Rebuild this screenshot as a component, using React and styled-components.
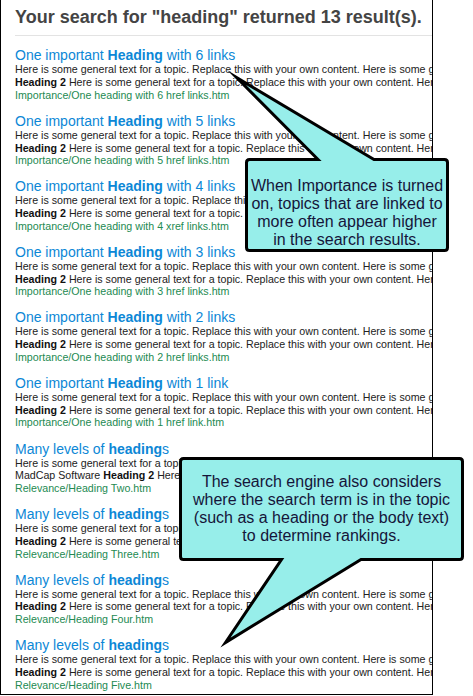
import React from "react";
import styled, { createGlobalStyle } from "styled-components";

const BODY_TEXT =
  "Here is some general text for a topic. Replace this with your own content. Here is some general text for a topic. Replace this with your own content.";

const importance = [
  { count: 6, kind: "href", word: "links" },
  { count: 5, kind: "href", word: "links" },
  { count: 4, kind: "xref", word: "links" },
  { count: 3, kind: "href", word: "links" },
  { count: 2, kind: "href", word: "links" },
  { count: 1, kind: "href", word: "link" },
].map((el) => ({
  title: (
    <>
      One important <b>Heading</b> with {el.count} {el.word}
    </>
  ),
  prefix: "",
  url: `Importance/One heading with ${el.count} ${el.kind} ${el.word}.htm`,
}));

const relevance = [
  { page: "Two", prefix: "MadCap Software " },
  { page: "Three", prefix: "" },
  { page: "Four", prefix: "" },
  { page: "Five", prefix: "" },
].map((el) => ({
  title: (
    <>
      Many levels of <b>heading</b>s
    </>
  ),
  prefix: el.prefix,
  url: `Relevance/Heading ${el.page}.htm`,
}));

const results = [...importance, ...relevance];

const App = () => {
  return (
    <>
      <GlobalStyle />
      <Page>
        <Frame>
          <Header>Your search for "heading" returned 13 result(s).</Header>
          <ResultList>
            {results.map((el, i) => (
              <Result key={i}>
                <ResultTitle>{el.title}</ResultTitle>
                <ResultText>{BODY_TEXT}</ResultText>
                <ResultText>
                  {el.prefix}
                  <b>Heading 2</b> {BODY_TEXT}
                </ResultText>
                <ResultUrl>{el.url}</ResultUrl>
              </Result>
            ))}
          </ResultList>
        </Frame>

        <Balloons viewBox="0 0 473 696" width="473" height="696">
          <path d="M 249.5 159.5 L 318 159.5 L 236.5 77.5 L 374 159.5 L 444.5 159.5 Q 447.5 159.5 447.5 162.5 L 447.5 247.5 Q 447.5 250.5 444.5 250.5 L 249.5 250.5 Q 246.5 250.5 246.5 247.5 L 246.5 162.5 Q 246.5 159.5 249.5 159.5 Z" />
          <path d="M 183.5 458.5 L 459.5 458.5 Q 462.5 458.5 462.5 461.5 L 462.5 556.5 Q 462.5 559.5 459.5 559.5 L 361 559.5 L 225.5 642.5 L 281.5 559.5 L 183.5 559.5 Q 180.5 559.5 180.5 556.5 L 180.5 461.5 Q 180.5 458.5 183.5 458.5 Z" />
        </Balloons>

        <BalloonText $left={245} $top={177} $width={204}>
          When Importance is turned
          <br />
          on, topics that are linked to
          <br />
          more often appear higher
          <br />
          in the search results.
        </BalloonText>
        <BalloonText $left={179} $top={473} $width={285}>
          The search engine also considers
          <br />
          where the search term is in the topic
          <br />
          (such as a heading or the body text)
          <br />
          to determine rankings.
        </BalloonText>
      </Page>
    </>
  );
};

const GlobalStyle = createGlobalStyle`
  html, body {
    margin: 0;
    padding: 0;
    background: #ffffff;
  }
  body {
    font-family: "Liberation Sans", Arial, sans-serif;
  }
`;

const Page = styled.div`
  position: relative;
  width: 473px;
  height: 696px;
  overflow: hidden;
`;

const Frame = styled.div`
  box-sizing: border-box;
  width: 433px;
  height: 695px;
  border: 1px solid #000;
  border-top: none;
  padding-left: 14px;
  overflow: hidden;
`;

const Header = styled.div`
  padding: 6px 0 7px;
  border-bottom: 1px solid #e3e3e3;
  font-size: 18px;
  line-height: 22px;
  font-weight: 700;
  color: #444444;
  white-space: nowrap;
`;

const ResultList = styled.div`
  display: flex;
  flex-direction: column;
  gap: 12.45px;
  margin-top: 12.3px;
`;

const Result = styled.div`
  display: flex;
  flex-direction: column;
  white-space: nowrap;
`;

const ResultTitle = styled.div`
  font-size: 14px;
  line-height: 15px;
  color: #0c87d6;
`;

const ResultText = styled.div`
  font-size: 10.67px;
  line-height: 12.7px;
  color: #222222;

  b {
    color: #111111;
  }
`;

const ResultUrl = styled.div`
  font-size: 10.67px;
  line-height: 12.7px;
  color: #238a52;
`;

const Balloons = styled.svg`
  position: absolute;
  top: 0;
  left: 0;
  pointer-events: none;

  path {
    fill: #97eeea;
    stroke: #000;
    stroke-width: 3;
    stroke-linejoin: miter;
    stroke-miterlimit: 20;
  }
`;

const BalloonText = styled.div`
  position: absolute;
  left: ${(props) => props.$left}px;
  top: ${(props) => props.$top}px;
  width: ${(props) => props.$width}px;
  font-size: 16px;
  line-height: 18px;
  color: #15153a;
  text-align: center;
  white-space: nowrap;
`;

export default App;
